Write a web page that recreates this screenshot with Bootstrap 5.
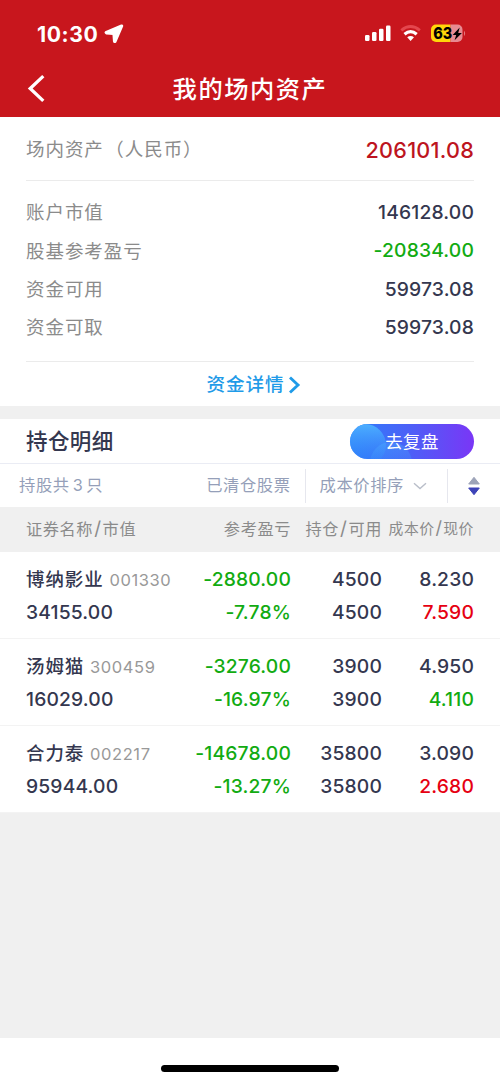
<!DOCTYPE html>
<html lang="zh-CN">
<head>
<meta charset="utf-8">
<meta name="viewport" content="width=device-width, initial-scale=1">
<title>我的场内资产</title>
<link href="https://cdn.jsdelivr.net/npm/bootstrap@5.3.0/dist/css/bootstrap.min.css" rel="stylesheet">
<style>
body{font-family:Inter,"Noto Sans CJK SC",sans-serif;background:#f0f0f0;color:#34374f;height:1083px;overflow:hidden}
svg{display:block;flex:none}
.top-area{background:#c8161d;color:#fff;height:117px}
.status{height:60px;padding:7px 33px 0 37px}
.clock{font-size:21.2px;font-weight:700;line-height:52px;letter-spacing:.55px}
.titlebar{height:57px;display:grid;grid-template-columns:60px 1fr 60px;align-items:center}
.page-title{font-size:24.3px;font-weight:500;letter-spacing:1.5px;line-height:55px;padding-top:2px}
.px-main{padding-left:26px;padding-right:26px}
.total{height:64px;border-bottom:1px solid #ebebeb;padding-top:1px}
.lbl{font-size:18.5px;letter-spacing:.95px;color:#8b8b8b;padding-top:2px}
.paren{margin-left:1.5px}
.total-num{font-size:21.6px;font-weight:500;color:#bd1420;letter-spacing:.25px;padding-top:2px}
.sum{padding:12px 0 14px;border-bottom:1px solid #ebebeb}
.sum>div{height:38.4px}
.num{font-size:19.3px;font-weight:500;letter-spacing:.15px}
.up{color:#e60012}.down{color:#12ab12}
.more{height:44px;color:#1f9be8;font-size:18.6px;letter-spacing:.9px;font-weight:500;padding:2px 0 0 8px}
.gap-band{height:13px;background:#f0f0f0}
.sec-head{height:45px;border-bottom:1px solid #eaecf4}
.sec-title{font-size:21.5px;font-weight:500;letter-spacing:.4px;padding-top:2px}
.review{position:relative;overflow:hidden;width:124px;height:35px;margin-top:2px;border-radius:18px;font-size:17.4px;letter-spacing:.5px;line-height:36px;color:#fff;background:linear-gradient(90deg,#2d80fa,#4c60f7 48%,#7a36f6)}
.review svg{position:absolute;left:0;top:0}
.review span{position:relative}
.filters{height:43px;padding-left:19px;color:#959fb9;font-size:16.3px;letter-spacing:.6px;padding-top:1px}
.count{margin:0 3px 0 3px}
.split{width:1px;height:34px;background:#e6e7ee}
.cols{display:grid;grid-template-columns:168px 97px 91px 92px;text-align:right}
.cols>:first-child{text-align:left}
.thead-row{height:45px;background:#f0f0f0;color:#8b8b8b;font-size:16.2px;letter-spacing:.6px;line-height:44px;white-space:nowrap}
.thead-row b{font-weight:400;font-size:19px;line-height:1;margin:0 1px 0 1px}
.thead-row .narrow{font-size:14.8px;margin-left:-12px}
.thead-row .narrow b{font-size:18px;margin:0 .7px}
.holding{height:87px;padding-top:11.5px;line-height:33.4px;border-bottom:1px solid #f3f3f3;white-space:nowrap}
.stock,.code{line-height:1}
.stock{font-size:18.5px;font-weight:500;letter-spacing:.9px}
.code{font-size:16.5px;color:#999;letter-spacing:.6px;margin-left:.5px}
.home{margin-top:auto;height:45px}
.home i{width:178px;height:7px;border-radius:4px;background:#000;margin-top:27px}
</style>
</head>
<body class="d-flex flex-column">
<header class="top-area">
  <div class="status d-flex justify-content-between align-items-center">
    <div class="d-flex align-items-center"><span class="clock">10:30</span>
      <svg style="margin-left:6px" width="20" height="19" viewBox="0 0 18 18"><path d="M16 1.200 1.500 7.300q-1.500 1 .3 1.800l6.500.6.500 6.700q.6 1.800 1.800.3L16.900 2.100q.2-1.100-.9-.9z" fill="#fff" stroke="#fff" stroke-width="1.600" stroke-linejoin="round"/></svg>
    </div>
    <svg width="102" height="20" viewBox="0 0 102 20">
      <g fill="#fff"><rect x="0" y="11" width="4.500" height="6" rx="1.200"/><rect x="7" y="8" width="4.500" height="9" rx="1.200"/><rect x="14" y="4.800" width="4.500" height="12.200" rx="1.200"/><rect x="21" y="1.500" width="4.500" height="15.500" rx="1.200"/></g>
      <g fill="none" stroke="#fff"><path d="M36.300 6.300q9.300-7.600 18.600 0" stroke="#e4464d" stroke-width="2.800"/><path d="M39.500 10.200q6.100-5.200 12.200 0" stroke-width="3.200"/></g>
      <path d="M42.200 13.200q3.400-2.600 6.800 0L45.600 17z" fill="#fff"/>
      <path d="M71 .500H85.500v17.500H71a5 5 0 0 1-5-5V5.500a5 5 0 0 1 5-5z" fill="#ffd60a"/><path d="M85.500.500H92.500a5 5 0 0 1 5 5v7.500a5 5 0 0 1-5 5H85.500z" fill="#e78b92"/><path d="M99 6.800q2.300 2.700 0 5.400z" fill="#e4787e"/>
      <text x="68.300" y="15.200" font-family="Inter,sans-serif" font-size="16.500" font-weight="800" textLength="19" lengthAdjust="spacingAndGlyphs" fill="#000">63</text>
      <path d="m94.700 3.600-7 7.300h3.500l-1.600 5.400L96.900 8.900h-3.700z" fill="#000"/>
    </svg>
  </div>
  <div class="titlebar">
    <svg width="60" height="57" viewBox="0 0 60 57"><path d="M43.300 16.100 30.200 28.500l13.100 12.400" fill="none" stroke="#fff" stroke-width="3.300"/></svg>
    <div class="page-title text-center">我的场内资产</div>
  </div>
</header>

<section class="bg-white px-main">
  <div class="total d-flex justify-content-between align-items-center"><span class="lbl">场内资产<span class="paren">（人民币）</span></span><span class="total-num">206101.08</span></div>
  <div class="sum">
    <div class="d-flex justify-content-between align-items-center"><span class="lbl">账户市值</span><span class="num">146128.00</span></div>
    <div class="d-flex justify-content-between align-items-center"><span class="lbl">股基参考盈亏</span><span class="num down">-20834.00</span></div>
    <div class="d-flex justify-content-between align-items-center"><span class="lbl">资金可用</span><span class="num">59973.08</span></div>
    <div class="d-flex justify-content-between align-items-center"><span class="lbl">资金可取</span><span class="num">59973.08</span></div>
  </div>
  <div class="more d-flex justify-content-center align-items-center"><span>资金详情</span>
    <svg class="ms-1" width="13" height="18" viewBox="0 0 13 18"><path d="m2 1.500 8 7.500-8 7.500" fill="none" stroke="#1f9be8" stroke-width="2.900"/></svg>
  </div>
</section>
<div class="gap-band"></div>

<section class="bg-white">
  <div class="sec-head px-main d-flex justify-content-between align-items-center">
    <span class="sec-title">持仓明细</span>
    <div class="review text-center">
      <svg width="124" height="35" viewBox="0 0 124 35"><defs><linearGradient id="a" x1="0" y1="0" x2="0" y2="1"><stop offset="0" stop-color="#4db0ff"/><stop offset="1" stop-color="#2d80fa" stop-opacity=".2"/></linearGradient></defs><circle cx="15" cy="21" r="21" fill="url(#a)"/><circle cx="41" cy="39" r="21" fill="url(#a)" opacity=".4"/></svg>
      <span>去复盘</span>
    </div>
  </div>
  <div class="filters d-flex align-items-center">
    <span>持股共<span class="count">3</span>只</span>
    <span class="ms-auto">已清仓股票</span>
    <span class="split" style="margin-left:14px"></span>
    <span style="margin-left:14px">成本价排序</span>
    <svg style="margin-left:9px" width="14" height="8" viewBox="0 0 14 8"><path d="m1 1.200 6 5.300 6-5.300" fill="none" stroke="#b9bec9" stroke-width="1.400"/></svg>
    <span class="split" style="margin-left:20px"></span>
    <svg style="margin:0 19px" width="14" height="20" viewBox="0 0 14 20"><path d="M7 1.300 12.300 8H1.700z" fill="#9ca3b8" stroke="#9ca3b8" stroke-linejoin="round"/><path d="M7 18.700 12.300 12H1.700z" fill="#3d43b8" stroke="#3d43b8" stroke-linejoin="round"/></svg>
  </div>
  <div class="thead-row cols px-main"><span>证券名称<b>/</b>市值</span><span>参考盈亏</span><span>持仓<b>/</b>可用</span><span class="narrow">成本价<b>/</b>现价</span></div>

  <div class="holding cols px-main num">
    <div><span class="stock">博纳影业</span> <span class="code fw-normal">001330</span><br>34155.00</div>
    <div class="down">-2880.00<br>-7.78%</div>
    <div>4500<br>4500</div>
    <div>8.230<br><span class="up">7.590</span></div>
  </div>
  <div class="holding cols px-main num">
    <div><span class="stock">汤姆猫</span> <span class="code fw-normal">300459</span><br>16029.00</div>
    <div class="down">-3276.00<br>-16.97%</div>
    <div>3900<br>3900</div>
    <div>4.950<br><span class="down">4.110</span></div>
  </div>
  <div class="holding cols px-main num">
    <div><span class="stock">合力泰</span> <span class="code fw-normal">002217</span><br>95944.00</div>
    <div class="down">-14678.00<br>-13.27%</div>
    <div>35800<br>35800</div>
    <div>3.090<br><span class="up">2.680</span></div>
  </div>
</section>

<footer class="home bg-white d-flex justify-content-center"><i></i></footer>
<script src="https://cdn.jsdelivr.net/npm/bootstrap@5.3.0/dist/js/bootstrap.bundle.min.js"></script>
</body>
</html>
